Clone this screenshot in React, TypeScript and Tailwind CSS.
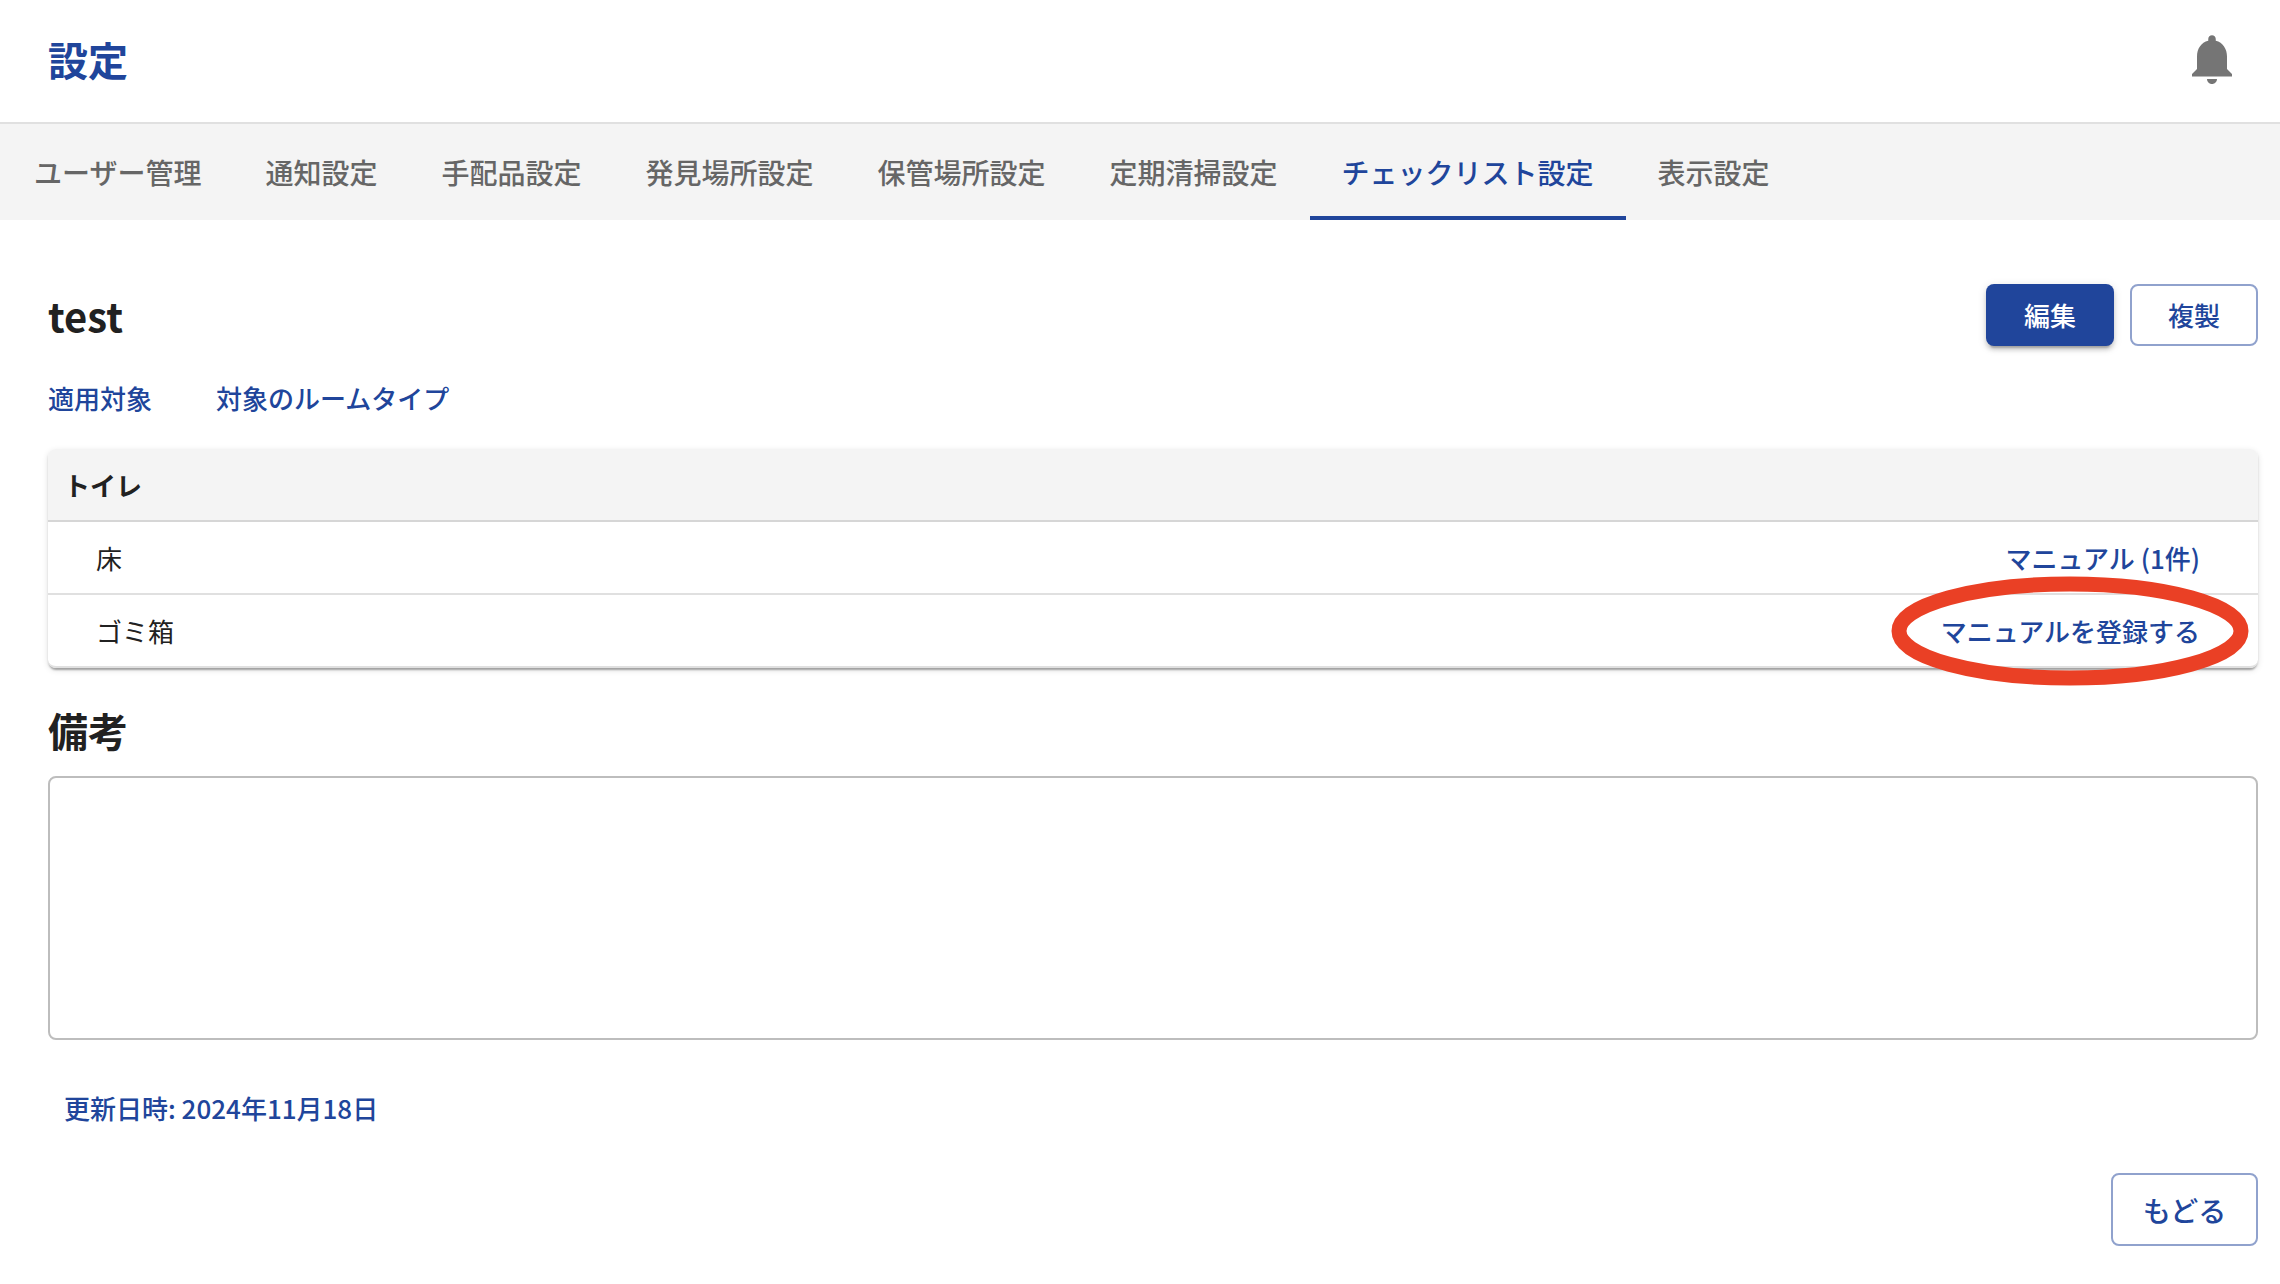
import React from "react";

const tabs = [
  "ユーザー管理",
  "通知設定",
  "手配品設定",
  "発見場所設定",
  "保管場所設定",
  "定期清掃設定",
  "チェックリスト設定",
  "表示設定",
];

const activeTab = "チェックリスト設定";

const items = [
  { name: "床", link: "マニュアル (1件)", marked: false },
  { name: "ゴミ箱", link: "マニュアルを登録する", marked: true },
];

function BellIcon() {
  return (
    <svg viewBox="0 0 24 24" className="size-[60px]" fill="currentColor">
      <path d="M12 22c1.1 0 2-.9 2-2h-4c0 1.1.89 2 2 2zm6-6v-5c0-3.07-1.64-5.64-4.5-6.32V4c0-.83-.67-1.5-1.5-1.5s-1.5.67-1.5 1.5v.68C7.63 5.36 6 7.92 6 11v5l-2 2v1h16v-1l-2-2z" />
    </svg>
  );
}

// Red ring laid over the link it surrounds
function Marker() {
  return (
    <svg
      viewBox="0 0 358 110"
      className="pointer-events-none absolute top-1/2 left-1/2 h-[110px] w-[358px] max-w-none -translate-x-1/2 -translate-y-1/2"
      fill="none"
      aria-hidden="true"
    >
      <ellipse
        cx="179"
        cy="55"
        rx="171"
        ry="47"
        stroke="#ea4025"
        strokeWidth="15"
      />
    </svg>
  );
}

function Header() {
  return (
    <header className="flex h-[124px] items-center justify-between border-b-2 border-[#e0e0e0] pr-[38px] pb-1 pl-12">
      <h1 className="text-[40px] leading-[60px] font-bold text-[#20459b]">
        設定
      </h1>
      <button type="button" aria-label="通知" className="text-[#757575]">
        <BellIcon />
      </button>
    </header>
  );
}

function TabBar() {
  return (
    <nav className="flex h-24 bg-[#f4f4f4] pl-0.5">
      {tabs.map((tab) => (
        <a
          key={tab}
          href="#"
          className={
            tab === activeTab
              ? "flex items-center border-y-4 border-t-transparent border-b-[#20459b] px-8 text-[28px] leading-10 font-medium text-[#20459b]"
              : "flex items-center border-y-4 border-transparent px-8 text-[28px] leading-10 font-medium text-[#666666]"
          }
        >
          {tab}
        </a>
      ))}
    </nav>
  );
}

function CheckTable() {
  return (
    <table className="mt-[31px] w-full border-separate border-spacing-0 rounded-lg bg-white shadow-[0_4px_2px_-2px_rgba(0,0,0,0.2),0_2px_2px_0_rgba(0,0,0,0.14),0_2px_6px_0_rgba(0,0,0,0.12)]">
      <thead>
        <tr>
          <th
            colSpan={2}
            className="h-[73px] rounded-t-lg border-b-2 border-[#d6d6d6] bg-[#f4f4f4] px-4 text-left font-bold"
          >
            トイレ
          </th>
        </tr>
      </thead>
      <tbody>
        {items.map((item, i) => {
          const last = i === items.length - 1;
          return (
            <tr key={item.name}>
              <td
                className={`h-[73px] border-b-2 border-[#e0e0e0] pl-12 ${last ? "rounded-bl-lg" : ""}`}
              >
                {item.name}
              </td>
              <td
                className={`h-[73px] border-b-2 border-[#e0e0e0] pr-[58px] text-right ${last ? "rounded-br-lg" : ""}`}
              >
                <a
                  href="#"
                  className="relative inline-block font-medium text-[#20459b]"
                >
                  {item.link}
                  {item.marked && <Marker />}
                </a>
              </td>
            </tr>
          );
        })}
      </tbody>
    </table>
  );
}

export default function App() {
  return (
    <div
      lang="ja"
      className="min-h-screen bg-white font-['Noto_Sans_CJK_JP',sans-serif] text-[26px] leading-10 text-[#212121]"
    >
      <Header />
      <TabBar />
      <main className="pt-16 pr-[22px] pb-9 pl-12">
        <div className="flex items-center justify-between">
          <h2 className="text-[40px] leading-[60px] font-bold">test</h2>
          <div className="flex gap-4">
            <button
              type="button"
              className="h-[62px] w-32 rounded-lg bg-[#20459b] font-medium text-white shadow-[0_6px_2px_-4px_rgba(0,0,0,0.2),0_4px_4px_0_rgba(0,0,0,0.14),0_2px_10px_0_rgba(0,0,0,0.12)]"
            >
              編集
            </button>
            <button
              type="button"
              className="h-[62px] w-32 rounded-lg border-2 border-[#90a2cd] font-medium text-[#20459b]"
            >
              複製
            </button>
          </div>
        </div>

        <div className="mt-8 flex gap-16 font-medium text-[#20459b]">
          <span>適用対象</span>
          <span>対象のルームタイプ</span>
        </div>

        <CheckTable />

        <label
          htmlFor="note"
          className="mt-8 block text-[40px] leading-[60px] font-bold"
        >
          備考
        </label>
        <textarea
          id="note"
          readOnly
          className="mt-4 block h-[264px] w-full resize-none rounded-lg border-2 border-[#bdbdbd] px-6 py-4"
        />

        <p className="mt-12 ml-4 font-medium text-[#20459b]">
          更新日時: 2024年11月18日
        </p>

        <div className="mt-[45px] flex justify-end">
          <button
            type="button"
            className="h-[73px] w-[147px] rounded-lg border-2 border-[#90a2cd] text-[28px] font-medium text-[#20459b]"
          >
            もどる
          </button>
        </div>
      </main>
    </div>
  );
}
